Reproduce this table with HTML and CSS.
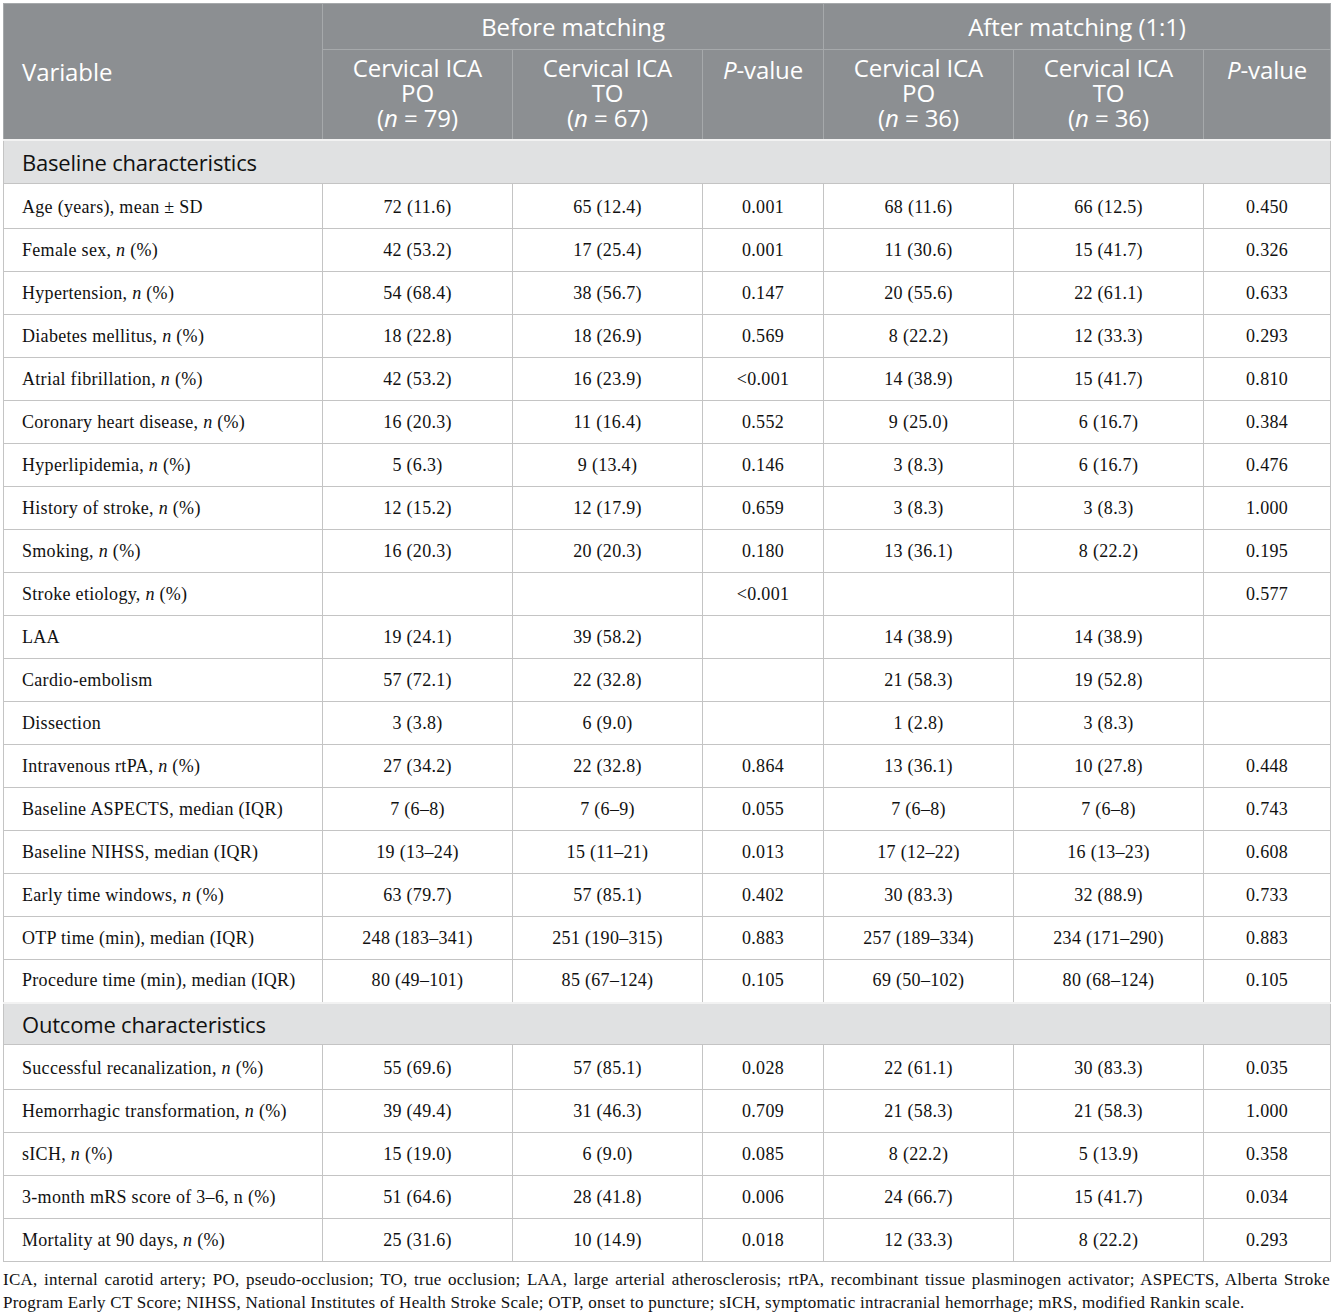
FILE: index.html
```html
<!DOCTYPE html>
<html lang="en">
<head>
    <meta charset="UTF-8">
    <meta name="viewport" content="width=device-width, initial-scale=1.0">
    <title>Baseline and outcome characteristics</title>
    <link rel="stylesheet" href="styles.css">
</head>
<body>
    <div class="wrap">
        <table class="data-table">
            <colgroup>
                <col class="c-var">
                <col class="c-num">
                <col class="c-num">
                <col class="c-p">
                <col class="c-num">
                <col class="c-num">
                <col class="c-p2">
            </colgroup>
            <thead>
                <tr class="head-top">
                    <th rowspan="2" class="var-head">Variable</th>
                    <th colspan="3">Before matching</th>
                    <th colspan="3">After matching (1:1)</th>
                </tr>
                <tr class="head-sub">
                    <th>Cervical ICA<br>PO<br>(<i>n</i> = 79)</th>
                    <th>Cervical ICA<br>TO<br>(<i>n</i> = 67)</th>
                    <th class="top"><i>P</i>-value</th>
                    <th>Cervical ICA<br>PO<br>(<i>n</i> = 36)</th>
                    <th>Cervical ICA<br>TO<br>(<i>n</i> = 36)</th>
                    <th class="top"><i>P</i>-value</th>
                </tr>
            </thead>
            <tbody>
                <tr class="section first"><td colspan="7">Baseline characteristics</td></tr>
                <tr><td>Age (years), mean ± SD</td><td>72 (11.6)</td><td>65 (12.4)</td><td>0.001</td><td>68 (11.6)</td><td>66 (12.5)</td><td>0.450</td></tr>
                <tr><td>Female sex, <i>n</i> (%)</td><td>42 (53.2)</td><td>17 (25.4)</td><td>0.001</td><td>11 (30.6)</td><td>15 (41.7)</td><td>0.326</td></tr>
                <tr><td>Hypertension, <i>n</i> (%)</td><td>54 (68.4)</td><td>38 (56.7)</td><td>0.147</td><td>20 (55.6)</td><td>22 (61.1)</td><td>0.633</td></tr>
                <tr><td>Diabetes mellitus, <i>n</i> (%)</td><td>18 (22.8)</td><td>18 (26.9)</td><td>0.569</td><td>8 (22.2)</td><td>12 (33.3)</td><td>0.293</td></tr>
                <tr><td>Atrial fibrillation, <i>n</i> (%)</td><td>42 (53.2)</td><td>16 (23.9)</td><td>&lt;0.001</td><td>14 (38.9)</td><td>15 (41.7)</td><td>0.810</td></tr>
                <tr><td>Coronary heart disease, <i>n</i> (%)</td><td>16 (20.3)</td><td>11 (16.4)</td><td>0.552</td><td>9 (25.0)</td><td>6 (16.7)</td><td>0.384</td></tr>
                <tr><td>Hyperlipidemia, <i>n</i> (%)</td><td>5 (6.3)</td><td>9 (13.4)</td><td>0.146</td><td>3 (8.3)</td><td>6 (16.7)</td><td>0.476</td></tr>
                <tr><td>History of stroke, <i>n</i> (%)</td><td>12 (15.2)</td><td>12 (17.9)</td><td>0.659</td><td>3 (8.3)</td><td>3 (8.3)</td><td>1.000</td></tr>
                <tr><td>Smoking, <i>n</i> (%)</td><td>16 (20.3)</td><td>20 (20.3)</td><td>0.180</td><td>13 (36.1)</td><td>8 (22.2)</td><td>0.195</td></tr>
                <tr><td>Stroke etiology, <i>n</i> (%)</td><td></td><td></td><td>&lt;0.001</td><td></td><td></td><td>0.577</td></tr>
                <tr><td>LAA</td><td>19 (24.1)</td><td>39 (58.2)</td><td></td><td>14 (38.9)</td><td>14 (38.9)</td><td></td></tr>
                <tr><td>Cardio-embolism</td><td>57 (72.1)</td><td>22 (32.8)</td><td></td><td>21 (58.3)</td><td>19 (52.8)</td><td></td></tr>
                <tr><td>Dissection</td><td>3 (3.8)</td><td>6 (9.0)</td><td></td><td>1 (2.8)</td><td>3 (8.3)</td><td></td></tr>
                <tr><td>Intravenous rtPA, <i>n</i> (%)</td><td>27 (34.2)</td><td>22 (32.8)</td><td>0.864</td><td>13 (36.1)</td><td>10 (27.8)</td><td>0.448</td></tr>
                <tr><td>Baseline ASPECTS, median (IQR)</td><td>7 (6–8)</td><td>7 (6–9)</td><td>0.055</td><td>7 (6–8)</td><td>7 (6–8)</td><td>0.743</td></tr>
                <tr><td>Baseline NIHSS, median (IQR)</td><td>19 (13–24)</td><td>15 (11–21)</td><td>0.013</td><td>17 (12–22)</td><td>16 (13–23)</td><td>0.608</td></tr>
                <tr><td>Early time windows, <i>n</i> (%)</td><td>63 (79.7)</td><td>57 (85.1)</td><td>0.402</td><td>30 (83.3)</td><td>32 (88.9)</td><td>0.733</td></tr>
                <tr><td>OTP time (min), median (IQR)</td><td>248 (183–341)</td><td>251 (190–315)</td><td>0.883</td><td>257 (189–334)</td><td>234 (171–290)</td><td>0.883</td></tr>
                <tr><td>Procedure time (min), median (IQR)</td><td>80 (49–101)</td><td>85 (67–124)</td><td>0.105</td><td>69 (50–102)</td><td>80 (68–124)</td><td>0.105</td></tr>
                <tr class="section"><td colspan="7">Outcome characteristics</td></tr>
                <tr><td>Successful recanalization, <i>n</i> (%)</td><td>55 (69.6)</td><td>57 (85.1)</td><td>0.028</td><td>22 (61.1)</td><td>30 (83.3)</td><td>0.035</td></tr>
                <tr><td>Hemorrhagic transformation, <i>n</i> (%)</td><td>39 (49.4)</td><td>31 (46.3)</td><td>0.709</td><td>21 (58.3)</td><td>21 (58.3)</td><td>1.000</td></tr>
                <tr><td>sICH, <i>n</i> (%)</td><td>15 (19.0)</td><td>6 (9.0)</td><td>0.085</td><td>8 (22.2)</td><td>5 (13.9)</td><td>0.358</td></tr>
                <tr><td>3-month mRS score of 3–6, n (%)</td><td>51 (64.6)</td><td>28 (41.8)</td><td>0.006</td><td>24 (66.7)</td><td>15 (41.7)</td><td>0.034</td></tr>
                <tr><td>Mortality at 90 days, <i>n</i> (%)</td><td>25 (31.6)</td><td>10 (14.9)</td><td>0.018</td><td>12 (33.3)</td><td>8 (22.2)</td><td>0.293</td></tr>
            </tbody>
        </table>
        <p class="note">ICA, internal carotid artery; PO, pseudo-occlusion; TO, true occlusion; LAA, large arterial atherosclerosis; rtPA, recombinant tissue plasminogen activator; ASPECTS, Alberta Stroke Program Early CT Score; NIHSS, National Institutes of Health Stroke Scale; OTP, onset to puncture; sICH, symptomatic intracranial hemorrhage; mRS, modified Rankin scale.</p>
    </div>
</body>
</html>
```

FILE: styles.css
```css
* {
    margin: 0;
    padding: 0;
    box-sizing: border-box;
}

body {
    background: #ffffff;
    font-family: 'Liberation Serif', 'Times New Roman', serif;
    color: #111111;
}

.wrap {
    width: 1333px;
    padding: 3px 3px 0 3px;
}

.data-table {
    width: 1327px;
    border-collapse: collapse;
    table-layout: fixed;
    border: 1px solid #b9b9b9;
}

.c-var { width: 319px; }
.c-num { width: 190px; }
.c-p { width: 121px; }
.c-p2 { width: 127px; }

/* header */
.data-table thead th {
    background: #8c8f92;
    color: #ffffff;
    font-family: 'Open Sans', 'Noto Sans', sans-serif;
    font-weight: 400;
    font-size: 24px;
    line-height: 25px;
    letter-spacing: -0.1px;
    border: 1px solid #a6a9ab;
    text-align: center;
    vertical-align: middle;
}

.head-top th {
    height: 46px;
}

.head-sub th {
    height: 90px;
    padding: 2px 4px 6px;
}

.head-sub th.top {
    vertical-align: top;
    padding-top: 7px;
}

.data-table thead th.var-head {
    text-align: left;
    padding-left: 18px;
    padding-top: 0;
}

.data-table thead i {
    font-style: italic;
}

/* body */
.data-table tbody td {
    height: 43px;
    border: 1px solid #c4c4c4;
    text-align: center;
    vertical-align: middle;
    font-size: 18px;
    letter-spacing: 0.3px;
    padding: 0 6px;
    white-space: nowrap;
}

.data-table tbody td:first-child {
    text-align: left;
    padding-left: 18px;
}

.data-table tbody tr.section td {
    background: #e0e1e2;
    font-family: 'Open Sans', 'Noto Sans', sans-serif;
    font-size: 22px;
    color: #111111;
    height: 42px;
    padding-left: 18px;
    letter-spacing: -0.2px;
    border-top: 2px solid #f2f2f2;
}

.data-table tbody tr.section.first td {
    height: 44px;
}

.data-table tbody tr.section + tr td {
    height: 45px;
    padding-top: 3px;
}

.note {
    font-size: 17px;
    line-height: 23px;
    letter-spacing: 0.25px;
    text-align: justify;
    color: #111111;
    padding-top: 6px;
}
```
